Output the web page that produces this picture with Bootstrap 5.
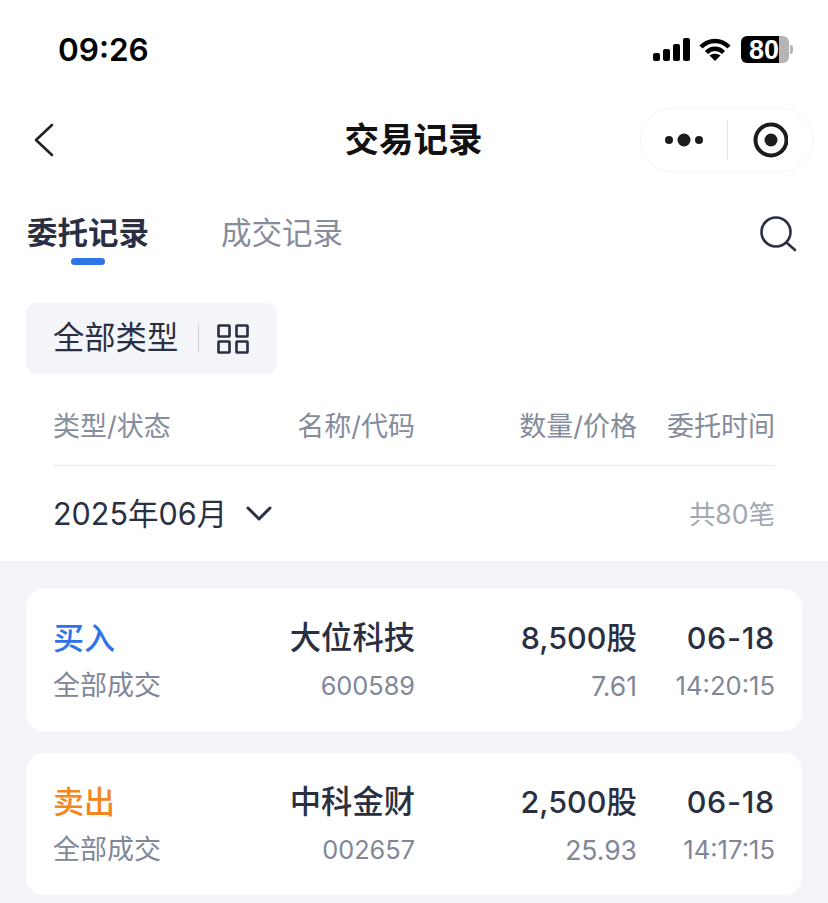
<!DOCTYPE html>
<html lang="zh-CN">
<head>
    <meta charset="UTF-8">
    <meta name="viewport" content="width=device-width, initial-scale=1.0">
    <title>交易记录</title>
    <link href="https://cdn.jsdelivr.net/npm/bootstrap@5.3.0/dist/css/bootstrap.min.css" rel="stylesheet">
    <style>
        body {
            font-family: Inter, "Noto Sans CJK SC", sans-serif;
            color: #2a3042;
            background: #f3f5f9;
            height: 903px;
            overflow: hidden;
        }

        .top-area {
            background: #fff;
            height: 563px;
            border-bottom: 1px solid #e8eaee;
        }

        .status-bar {
            height: 100px;
            padding: 31px 35px 0 58px;
        }

        .clock {
            font-family: Inter, sans-serif;
            font-size: 31.5px;
            font-weight: 600;
            line-height: 38px;
            color: #000;
        }

        .status-icons {
            margin-top: 5px;
        }

        .wifi-icon {
            margin-right: 10px;
        }

        .battery {
            width: 48px;
            height: 27px;
            background: linear-gradient(90deg, #000 38px, #b5b5b5 38px);
            border-radius: 6px;
            color: #fff;
            font-family: "Liberation Sans", sans-serif;
            font-size: 27px;
            font-weight: 700;
            line-height: 28px;
            padding-left: 8px;
        }

        .battery-tip {
            width: 3px;
            height: 9px;
            margin-left: 1px;
            background: #b5b5b5;
            border-radius: 0 3px 3px 0;
        }

        .nav-row {
            height: 80px;
            padding: 0 14px 0 32px;
        }

        .page-title {
            font-size: 34.5px;
            font-weight: 700;
            color: #111;
            line-height: 80px;
            left: -1px;
            right: 0;
            top: 0;
        }

        .capsule {
            width: 174px;
            height: 64px;
            border: 1px solid #f4f4f4;
            border-radius: 32px;
            margin-top: -1px;
            z-index: 1;
        }

        .capsule-half {
            width: 87px;
        }

        .capsule-line {
            width: 1px;
            height: 40px;
            background: #e6e6e6;
        }

        .tabs-row {
            height: 123px;
            padding: 30px 31px 0 27px;
        }

        .tab-item {
            font-size: 30.5px;
            line-height: 46px;
            margin-right: 72px;
            color: #858c9c;
        }

        .tab-on {
            color: #2a3042;
            font-weight: 700;
        }

        .tab-on::after {
            content: "";
            position: absolute;
            left: 44px;
            top: 48px;
            width: 34px;
            height: 7px;
            border-radius: 4px;
            background: #2f73e8;
        }

        .search-icon {
            margin-top: 6px;
        }

        .type-chip {
            width: 251px;
            height: 71px;
            margin-left: 26px;
            background: #f3f5f9;
            border-radius: 10px;
            padding-left: 27px;
            font-size: 31.3px;
        }

        .chip-line {
            width: 1px;
            height: 27px;
            background: #c9ccd3;
            margin: 0 18px 0 20px;
        }

        .cols {
            display: grid;
            grid-template-columns: 150px 212px 222px 138px;
        }

        .head-row {
            margin: 30px 53px 0;
            height: 62px;
            border-bottom: 1px solid #e8eaee;
            font-size: 27px;
            line-height: 46px;
            color: #858c9c;
            white-space: nowrap;
        }

        .month-row {
            margin: 0 53px;
            height: 96px;
        }

        .month-label {
            font-size: 30.5px;
            line-height: 98px;
        }

        .month-arrow {
            margin-left: 19px;
        }

        .total-label {
            font-size: 26.5px;
            color: #a3a8b4;
            line-height: 98px;
        }

        .trade-list {
            padding-top: 26px;
        }

        .trade-card {
            height: 142px;
            margin: 0 26px 21.5px;
            padding: 25px 27px 0;
            background: #fff;
            border-radius: 18px;
            white-space: nowrap;
        }

        .line-a {
            font-size: 30.5px;
            line-height: 48px;
            font-weight: 500;
        }

        .line-b {
            font-size: 27px;
            line-height: 48px;
            color: #808797;
        }

        .side-text {
            font-size: 31px;
        }

        .name-text {
            font-size: 31.3px;
        }

        .date-text {
            letter-spacing: .7px;
        }

        .code-text {
            font-size: 25.3px;
        }

        .price-text {
            font-size: 26.5px;
        }

        .time-text {
            font-size: 25.6px;
        }

        .buy {
            color: #2f73e8;
        }

        .sell {
            color: #f5871f;
        }
    </style>
</head>
<body>
    <div class="top-area">
        <div class="status-bar d-flex justify-content-between align-items-start">
            <div class="clock">09:26</div>
            <div class="status-icons d-flex align-items-center">
                <svg width="38" height="23" viewBox="0 0 38 23" class="me-2">
                    <rect x="0" y="15" width="7" height="8" rx="2"/>
                    <rect x="10" y="11" width="7" height="12" rx="2"/>
                    <rect x="20" y="6" width="7" height="17" rx="2"/>
                    <rect x="30" y="0" width="7" height="23" rx="2"/>
                </svg>
                <svg width="32" height="24" viewBox="0 0 32 24" class="wifi-icon" fill="none" stroke="#000" stroke-width="4.5">
                    <path d="M2 9C10 1 22 1 30 9"/>
                    <path d="M7.5 14.5C12.5 9.5 19.5 9.5 24.5 14.5"/>
                    <path d="M16 23L10.5 17.5C13.5 15 18.5 15 21.5 17.5Z" fill="#000" stroke="none"/>
                </svg>
                <div class="battery">80</div>
                <div class="battery-tip"></div>
            </div>
        </div>
        <div class="nav-row position-relative d-flex justify-content-between align-items-center">
            <div class="page-title position-absolute text-center">交易记录</div>
            <svg width="24" height="36" viewBox="0 0 24 36" fill="none" stroke="#222" stroke-width="2.6" stroke-linecap="round" stroke-linejoin="round" class="position-relative">
                <path d="M20 3L4 18L20 33"/>
            </svg>
            <div class="capsule d-flex align-items-center position-relative">
                <div class="capsule-half d-flex justify-content-center align-items-center gap-1">
                    <svg width="38" height="14" viewBox="0 0 38 14" fill="#1c1c1c">
                        <circle cx="4" cy="7" r="4"/><circle cx="19" cy="7" r="6.5"/><circle cx="34" cy="7" r="4"/>
                    </svg>
                </div>
                <div class="capsule-line"></div>
                <div class="capsule-half d-flex justify-content-center align-items-center">
                    <svg width="36" height="36" viewBox="0 0 36 36">
                        <circle cx="19" cy="18" r="15.5" fill="none" stroke="#1c1c1c" stroke-width="4"/>
                        <circle cx="19" cy="18" r="6.5" fill="#1c1c1c"/>
                    </svg>
                </div>
            </div>
        </div>
        <div class="tabs-row d-flex align-items-start">
            <div class="tab-item tab-on position-relative">委托记录</div>
            <div class="tab-item">成交记录</div>
            <svg width="37" height="36" viewBox="0 0 37 36" fill="none" stroke="#2a3042" stroke-width="2.6" stroke-linecap="round" class="ms-auto search-icon">
                <circle cx="16" cy="16" r="14.5"/>
                <path d="M27 27L35 34"/>
            </svg>
        </div>
        <div class="type-chip d-flex align-items-center">
            <span>全部类型</span>
            <span class="chip-line"></span>
            <svg width="32" height="30" viewBox="0 0 32 30" fill="none" stroke="#2a3042" stroke-width="2.6">
                <rect x="1.5" y="1.5" width="11" height="11" rx=".5"/>
                <rect x="19.5" y="1.5" width="11" height="11" rx=".5"/>
                <rect x="1.5" y="17.5" width="11" height="11" rx=".5"/>
                <rect x="19.5" y="17.5" width="11" height="11" rx=".5"/>
            </svg>
        </div>
        <div class="head-row cols">
            <div>类型/状态</div>
            <div class="text-end">名称/代码</div>
            <div class="text-end">数量/价格</div>
            <div class="text-end">委托时间</div>
        </div>
        <div class="month-row d-flex justify-content-between align-items-center">
            <div class="d-flex align-items-center">
                <span class="month-label">2025年06月</span>
                <svg width="26" height="16" viewBox="0 0 26 16" fill="none" stroke="#2a3042" stroke-width="3" stroke-linecap="round" stroke-linejoin="round" class="month-arrow">
                    <path d="M2 2L13 13L24 2"/>
                </svg>
            </div>
            <span class="total-label">共80笔</span>
        </div>
    </div>

    <div id="tradeList" class="trade-list"></div>

    <script src="https://cdn.jsdelivr.net/npm/bootstrap@5.3.0/dist/js/bootstrap.bundle.min.js"></script>
    <script>
        const trades = [
            { side: "买入", cls: "buy", name: "大位科技", code: "600589", qty: "8,500股", price: "7.61", date: "06-18", time: "14:20:15" },
            { side: "卖出", cls: "sell", name: "中科金财", code: "002657", qty: "2,500股", price: "25.93", date: "06-18", time: "14:17:15" }
        ];
        const tradeList = document.getElementById("tradeList");
        trades.forEach(t => {
            const card = document.createElement("div");
            card.className = "trade-card";
            card.innerHTML = `
                <div class="cols line-a">
                    <div class="side-text ${t.cls}">${t.side}</div>
                    <div class="text-end name-text">${t.name}</div>
                    <div class="text-end">${t.qty}</div>
                    <div class="text-end date-text">${t.date}</div>
                </div>
                <div class="cols line-b">
                    <div>全部成交</div>
                    <div class="text-end code-text">${t.code}</div>
                    <div class="text-end price-text">${t.price}</div>
                    <div class="text-end time-text">${t.time}</div>
                </div>`;
            tradeList.appendChild(card);
        });
    </script>
</body>
</html>
